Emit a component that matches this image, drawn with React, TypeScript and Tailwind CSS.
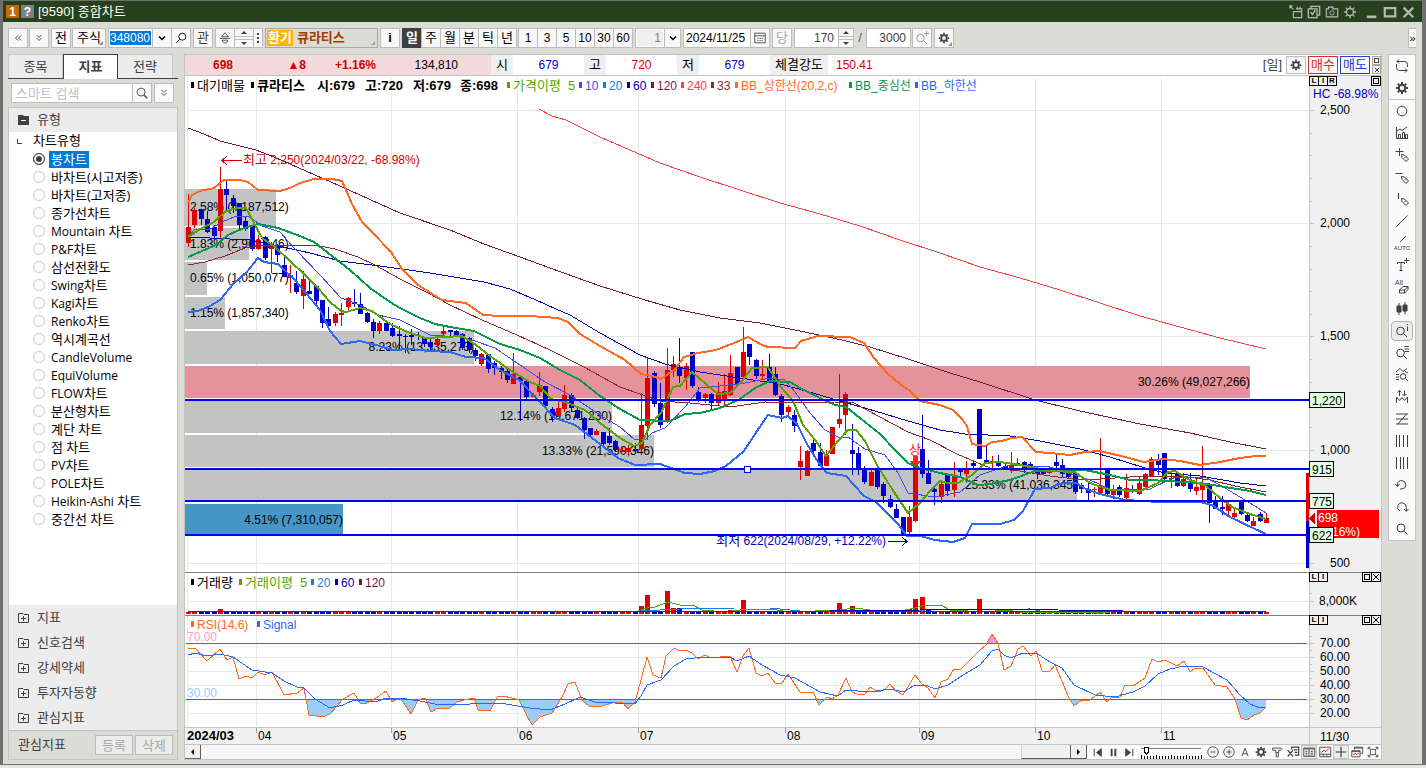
import { useState } from "react";
import type { ReactNode } from "react";
import clsx from "clsx";

// [high, body top, body bottom, low, rising]
const candles: number[][] = [
  [194, 227, 243, 247, 1], [208, 210, 225, 228, 1], [209, 209, 219, 225, 0], [211, 219, 232, 233, 0], [225, 227, 236, 240, 0],
  [167, 189, 231, 238, 1], [181, 189, 195, 212, 0], [195, 198, 206, 213, 0], [203, 203, 225, 229, 0], [217, 221, 229, 231, 0],
  [225, 225, 249, 251, 0], [235, 240, 249, 250, 1], [236, 237, 258, 260, 0], [242, 246, 249, 273, 1], [244, 247, 255, 262, 0],
  [257, 265, 277, 277, 0], [265, 275, 278, 293, 1], [271, 283, 292, 294, 0], [271, 279, 296, 309, 1], [281, 291, 294, 294, 0],
  [286, 286, 301, 305, 0], [300, 300, 323, 328, 0], [307, 319, 326, 326, 0], [312, 314, 323, 326, 1], [303, 313, 315, 326, 1],
  [297, 298, 307, 312, 1], [289, 302, 304, 307, 0], [293, 304, 314, 314, 0], [312, 313, 322, 323, 0], [319, 322, 331, 338, 0],
  [321, 323, 331, 334, 1], [322, 323, 331, 331, 0], [323, 328, 336, 337, 0], [326, 334, 336, 349, 0], [334, 336, 337, 353, 0],
  [329, 335, 337, 345, 0], [332, 335, 336, 340, 0], [337, 338, 344, 347, 0], [338, 342, 347, 352, 0], [338, 339, 345, 347, 1],
  [327, 331, 334, 337, 1], [330, 330, 332, 337, 0], [330, 331, 335, 337, 0], [333, 334, 348, 350, 0], [337, 338, 350, 353, 0],
  [348, 350, 356, 361, 0], [353, 354, 364, 366, 1], [354, 354, 369, 373, 0], [361, 363, 368, 375, 0], [366, 368, 372, 379, 0],
  [369, 371, 380, 383, 0], [353, 374, 384, 384, 1], [377, 377, 381, 421, 0], [380, 381, 397, 399, 0], [393, 395, 397, 397, 1],
  [372, 385, 392, 396, 1], [386, 386, 406, 407, 0], [407, 409, 416, 422, 0], [402, 408, 416, 416, 1], [385, 395, 409, 412, 1],
  [393, 395, 408, 412, 0], [408, 410, 418, 419, 0], [417, 418, 430, 439, 0], [428, 428, 435, 436, 0], [429, 431, 435, 435, 1],
  [432, 432, 444, 448, 0], [428, 436, 443, 445, 0], [440, 441, 450, 452, 0], [447, 450, 452, 452, 1], [445, 448, 452, 453, 1],
  [443, 449, 451, 452, 0], [393, 425, 449, 450, 1], [358, 378, 426, 440, 1], [371, 373, 404, 407, 0], [383, 403, 425, 428, 0],
  [348, 370, 422, 423, 1], [356, 364, 371, 377, 1], [338, 367, 376, 383, 0], [363, 366, 378, 390, 1], [352, 352, 386, 388, 0],
  [387, 392, 400, 402, 0], [393, 394, 398, 403, 1], [393, 394, 403, 409, 0], [382, 392, 403, 405, 1], [374, 391, 401, 405, 1],
  [355, 373, 395, 396, 1], [367, 367, 384, 386, 0], [327, 352, 377, 378, 1], [344, 344, 357, 365, 0], [359, 360, 376, 379, 0],
  [360, 374, 376, 380, 1], [354, 367, 381, 382, 0], [367, 374, 395, 396, 0], [394, 396, 415, 422, 0], [405, 407, 412, 417, 1],
  [410, 415, 426, 432, 0], [446, 461, 467, 480, 1], [450, 451, 476, 476, 1], [440, 443, 451, 453, 0], [443, 452, 466, 467, 0],
  [450, 455, 466, 466, 1], [427, 427, 454, 454, 1], [374, 419, 424, 428, 1], [392, 394, 415, 435, 1], [424, 450, 454, 475, 0],
  [447, 453, 469, 475, 0], [466, 468, 482, 484, 0], [470, 472, 486, 486, 1], [468, 469, 487, 489, 0], [482, 484, 496, 503, 0],
  [495, 499, 507, 508, 0], [504, 509, 518, 518, 0], [517, 517, 534, 534, 0], [506, 517, 532, 534, 1], [465, 465, 521, 522, 1],
  [415, 449, 474, 478, 0], [460, 473, 484, 484, 0], [487, 489, 492, 505, 0], [481, 484, 497, 503, 1], [474, 475, 491, 496, 0],
  [462, 476, 490, 497, 1], [468, 470, 472, 477, 0], [461, 469, 474, 478, 1], [461, 463, 466, 470, 0], [409, 409, 459, 459, 0],
  [445, 460, 462, 463, 0], [456, 461, 463, 471, 1], [455, 462, 466, 467, 0], [462, 466, 469, 470, 0], [452, 466, 468, 473, 1],
  [458, 463, 464, 465, 1], [461, 462, 468, 473, 0], [462, 464, 469, 470, 0], [467, 469, 474, 479, 0], [468, 472, 474, 475, 0],
  [467, 470, 473, 474, 1], [453, 462, 466, 470, 0], [459, 465, 474, 478, 0], [472, 473, 477, 479, 0], [473, 473, 492, 494, 0],
  [483, 485, 489, 493, 0], [483, 489, 493, 500, 0], [487, 489, 490, 497, 1], [438, 486, 493, 494, 1], [468, 469, 494, 495, 0],
  [485, 490, 495, 499, 1], [485, 487, 495, 497, 0], [474, 488, 498, 499, 1], [485, 489, 491, 493, 0], [477, 483, 494, 495, 1],
  [473, 474, 487, 489, 1], [457, 459, 476, 477, 1], [454, 459, 465, 475, 0], [453, 453, 479, 480, 0], [470, 478, 479, 488, 1],
  [473, 474, 486, 487, 0], [473, 479, 486, 487, 1], [473, 482, 489, 492, 0], [477, 487, 491, 495, 1], [446, 485, 490, 501, 1],
  [483, 484, 503, 523, 0], [496, 501, 509, 509, 0], [496, 507, 509, 515, 0], [502, 504, 511, 516, 1], [507, 513, 517, 518, 1],
  [500, 501, 514, 515, 0], [514, 515, 521, 522, 0], [517, 521, 526, 526, 1], [512, 514, 521, 522, 0], [513, 518, 523, 523, 1],
];

const barX = (i: number) => Math.round(188 + i * 6.38);

// bars taller than the usual one-pixel volume
const volumeTops: Record<number, number> = {
  5: 609, 71: 606, 72: 595, 73: 610, 75: 591, 76: 608, 77: 608, 85: 610, 87: 600, 102: 603, 104: 606, 113: 609, 114: 599, 115: 597, 116: 609, 120: 611, 124: 599,
};

const profile = [
  { y: 189, h: 37, x2: 276, text: "2.58% (4,187,512)", tx: 190, start: true, ty: 211 },
  { y: 228, h: 32, x2: 249, text: "1.83% (2,968,146)", tx: 190, start: true, ty: 248 },
  { y: 262, h: 33, x2: 207, text: "0.65% (1,050,077)", tx: 190, start: true, ty: 282 },
  { y: 297, h: 32, x2: 225, text: "1.15% (1,857,340)", tx: 190, start: true, ty: 317 },
  { y: 331, h: 33, x2: 474, text: "8.23% (13,335,273)", tx: 474, ty: 351 },
  { y: 366, h: 32, x2: 1250, text: "30.26% (49,027,266)", tx: 1250, ty: 386, fill: "#e6929a" },
  { y: 401, h: 32, x2: 612, text: "12.14% (19,671,230)", tx: 612, ty: 420 },
  { y: 435, h: 32, x2: 654, text: "13.33% (21,590,346)", tx: 654, ty: 455 },
  { y: 470, h: 31, x2: 1077, text: "25.33% (41,036,345)", tx: 1077, ty: 489 },
  { y: 504, h: 30, x2: 343, text: "4.51% (7,310,057)", tx: 343, ty: 524, fill: "#4696c6" },
];

const lines = [
  { c: "#ff4040", w: 1, p: "539,109 552,116 566,120 580,127 600,137 630,150 660,163 700,177 740,190 780,203 820,214 860,226 900,240 940,253 980,267 1020,278 1060,290 1100,303 1140,316 1180,327 1220,338 1266,349" },
  { c: "#701850", w: 1, p: "188,128 204,134 220,141 256,150 274,157 290,164 340,186 400,213 450,230 484,244 520,257 550,268 600,286 645,300 680,310 720,318 760,323 800,331 842,340 870,347 908,359 950,373 980,382 1035,400 1080,411 1140,424 1190,433 1230,442 1266,449" },
  { c: "#0000b8", w: 1, p: "188,237 210,238 250,240 265,243 310,253 340,261 380,266 430,273 484,282 510,289 536,300 556,309 570,315 600,333 640,355 665,364 700,372 740,378 780,384 806,391 840,401 875,411 908,421 940,430 965,434 1010,436 1040,441 1080,449 1110,457 1145,468 1165,473 1200,476 1240,483 1266,486" },
  { c: "#902828", w: 1, p: "188,265 205,262 225,256 245,248 265,245 315,245 335,249 358,257 375,265 400,279 430,294 450,305 482,320 517,335 550,350 584,367 620,387 640,394 660,401 690,403 730,407 765,402 800,403 835,402 852,402 880,417 908,432 930,440 957,454 990,468 1020,471 1050,476 1075,479 1100,479 1130,477 1180,476 1210,480 1235,486 1266,492" },
  { c: "#4848f0", w: 1, p: "188,237 195,229 210,229 222,222 234,217 248,216 262,226 280,232 295,249 320,275 341,298 360,305 378,315 400,320 430,335 460,337 475,341 495,348 520,365 545,382 570,395 600,415 620,427 634,439 645,440 652,433 665,428 685,407 700,388 720,386 745,383 770,378 785,380 795,392 810,413 825,430 838,437 848,437 865,449 885,455 898,473 908,493 935,497 960,492 980,475 1010,465 1050,467 1090,480 1110,489 1150,489 1175,477 1205,477 1225,488 1250,503 1266,513" },
  { c: "#009c48", w: 2, p: "188,257 202,251 216,245 228,235 244,228 258,224 278,228 300,236 314,242 332,256 350,270 370,288 390,302 400,308 420,318 435,324 450,327 474,331 500,344 520,350 540,358 560,370 580,380 600,396 620,409 640,420 670,421 685,414 700,413 720,408 740,399 755,388 770,381 790,382 800,388 820,398 835,405 846,407 860,418 880,434 895,450 908,463 920,468 940,473 960,477 978,485 990,484 1010,480 1035,471 1060,470 1085,470 1110,475 1130,480 1150,480 1200,483 1225,487 1250,491 1266,495" },
  { c: "#ff6820", w: 2, p: "188,203 192,195 200,191 214,188 224,180 240,180 248,182 258,190 280,191 290,188 300,183 314,179 332,179 342,181 352,204 362,222 372,232 391,252 402,269 418,285 426,290 442,300 466,303 483,315 500,316 530,316 558,318 568,322 580,334 600,346 625,360 641,374 652,376 661,379 675,369 684,357 698,353 716,350 734,343 748,337 762,345 768,347 795,348 801,341 818,336 850,337 864,343 874,358 888,374 900,384 910,391 920,401 940,405 953,410 962,419 967,426 972,444 985,446 992,442 1002,441 1012,438 1022,437 1036,452 1050,453 1070,455 1085,452 1100,451 1125,457 1144,462 1163,459 1180,461 1200,465 1220,462 1240,458 1256,456 1266,456" },
  { c: "#2c68f8", w: 2, p: "188,312 198,311 210,306 220,300 234,283 246,273 258,258 264,262 278,264 295,280 306,293 320,310 330,331 341,344 360,341 376,345 393,350 410,349 430,351 450,352 466,357 484,358 500,370 519,380 540,402 555,418 575,425 600,444 618,458 635,465 660,464 685,473 700,474 715,471 726,466 744,451 757,431 768,415 782,418 788,416 797,424 807,444 818,462 827,473 846,476 864,496 876,502 898,524 907,536 920,536 935,540 953,542 965,538 972,524 1000,524 1014,520 1023,511 1035,489 1050,488 1062,483 1076,483 1086,489 1100,494 1125,500 1160,502 1200,502 1212,505 1230,517 1255,529 1266,534" },
  { c: "#55a400", w: 2, p: "188,237 200,229 214,222 226,211 238,208 246,208 262,238 275,247 290,261 305,275 318,288 330,302 341,311 346,312 360,308 372,311 390,324 405,331 425,338 445,337 462,336 476,345 490,356 510,370 530,382 540,386 551,399 565,402 585,410 600,423 620,438 634,446 642,443 650,425 661,413 667,400 673,387 680,386 692,372 706,384 718,394 730,393 742,381 752,368 768,367 780,386 793,401 803,425 815,440 826,456 838,441 848,430 856,430 865,441 877,465 892,489 908,513 920,503 930,491 940,481 948,483 958,483 972,475 985,463 1000,462 1020,465 1050,471 1075,472 1090,483 1110,490 1140,491 1158,483 1168,472 1175,471 1188,479 1206,486 1220,498 1232,507 1250,514 1266,519" },
];

const rsi =
  "188,649 195,648 207,661 220,649 227,660 233,657 239,679 246,676 252,678 258,672 265,675 272,672 284,695 297,693 304,688 309,715 322,717 330,714 343,699 354,693 360,703 367,703 376,698 386,691 392,702 400,698 405,705 411,714 418,700 425,698 431,712 438,708 450,708 457,702 464,700 474,698 478,710 490,711 497,697 503,696 512,698 519,700 526,714 532,725 540,717 552,713 562,697 568,684 575,682 582,700 590,707 602,706 615,702 623,703 628,709 635,702 641,680 647,657 653,675 661,678 666,656 674,648 680,651 686,650 692,653 698,659 705,655 711,658 730,656 737,672 743,656 749,648 756,673 762,676 768,673 775,683 782,683 788,674 800,692 813,692 819,705 827,697 832,699 838,695 846,678 852,692 857,694 865,694 870,687 878,692 884,690 890,684 896,691 903,695 915,675 922,684 928,688 935,698 941,682 948,679 954,669 960,670 980,650 986,645 992,634 998,643 1004,670 1011,666 1018,649 1023,646 1031,656 1036,651 1042,671 1050,671 1055,665 1062,681 1068,696 1074,706 1082,700 1090,700 1100,692 1107,702 1112,697 1120,697 1125,685 1133,686 1145,678 1152,659 1158,662 1165,660 1177,666 1184,661 1190,672 1195,668 1203,668 1215,685 1227,687 1235,699 1241,718 1247,720 1254,715 1260,713 1266,707";
const signal =
  "188,655 195,653 207,656 220,654 233,657 252,670 272,673 284,681 297,687 304,688 315,699 330,708 343,705 354,700 375,702 386,698 400,698 420,701 440,705 470,704 500,703 530,708 550,710 565,704 580,697 595,702 615,703 635,704 641,696 647,685 661,680 674,666 686,659 705,657 730,657 737,661 749,656 762,665 780,675 795,678 820,692 838,696 846,690 870,692 890,689 903,692 915,685 928,686 935,689 948,685 960,677 980,665 992,651 998,649 1004,655 1011,658 1023,653 1036,653 1050,662 1062,668 1074,685 1095,695 1115,697 1133,692 1145,686 1158,674 1170,669 1184,666 1203,667 1227,680 1240,695 1250,704 1260,708 1266,707";

const legends = [
  { x: 191, y: 90, t: "대기매물", c: "#000" },
  { x: 251, y: 90, t: "큐라티스", c: "#000", b: true },
  { x: 311, y: 90, t: "시:679", c: "#000", b: true, bare: true },
  { x: 359, y: 90, t: "고:720", c: "#000", b: true, bare: true },
  { x: 407, y: 90, t: "저:679", c: "#000", b: true, bare: true },
  { x: 454, y: 90, t: "종:698", c: "#000", b: true, bare: true },
  { x: 507, y: 90, t: "가격이평  5", c: "#55a400" },
  { x: 579, y: 90, t: "10", c: "#4848f0" },
  { x: 603, y: 90, t: "20", c: "#1080d8" },
  { x: 627, y: 90, t: "60", c: "#0000b8" },
  { x: 651, y: 90, t: "120", c: "#701850" },
  { x: 681, y: 90, t: "240", c: "#ff4040" },
  { x: 711, y: 90, t: "33", c: "#902828" },
  { x: 735, y: 90, t: "BB_상한선(20,2,c)", c: "#ff6820" },
  { x: 849, y: 90, t: "BB_중심선", c: "#009c48" },
  { x: 915, y: 90, t: "BB_하한선", c: "#2c68f8" },
  { x: 191, y: 587, t: "거래량", c: "#000" },
  { x: 239, y: 587, t: "거래이평  5", c: "#55a400" },
  { x: 311, y: 587, t: "20", c: "#1080d8" },
  { x: 335, y: 587, t: "60", c: "#0000b8" },
  { x: 359, y: 587, t: "120", c: "#701850" },
  { x: 191, y: 629, t: "RSI(14,6)", c: "#ff6820" },
  { x: 257, y: 629, t: "Signal", c: "#2c68f8" },
];

const months: [number, string][] = [
  [256, "04"], [391, "05"], [517, "06"], [638, "07"], [785, "08"], [919, "09"], [1035, "10"], [1161, "11"],
];

const levels = [
  { y: 400, t: "1,220", w: 35 },
  { y: 469, t: "915", w: 24 },
  { y: 501, t: "775", w: 24 },
  { y: 535, t: "622", w: 24 },
];

function PriceChart() {
  return (
    <svg viewBox="185 76 1196 668" className="block h-auto w-full text-[12px]" role="img" aria-label="큐라티스 일봉 차트" shapeRendering="crispEdges">
      <rect x="185" y="76" width="1196" height="668" fill="#fff" />
      <rect x="1309" y="76" width="72" height="668" fill="#f0f0f0" />
      <rect x="185" y="727" width="1196" height="17" fill="#f0f0f0" />

      {/* Grid */}
      <g fill="#e8e8e8">
        {[110, 223, 336, 450, 563, 601, 657, 671, 685, 713].map((y) => (
          <rect key={y} x="187" y={y} width="1121" height="1" />
        ))}
        {[187, ...months.map((m) => m[0])].map((x) => (
          <rect key={x} x={x} y="77" width="1" height="649" />
        ))}
      </g>

      {/* Volume profile */}
      {profile.map((p) => (
        <rect key={p.y} x="185" y={p.y} width={p.x2 - 185} height={p.h} fill={p.fill ?? "#c3c3c3"} />
      ))}
      {profile.map((p) => (
        <text key={p.y} x={p.tx} y={p.ty} textAnchor={p.start ? "start" : "end"}>
          {p.text}
        </text>
      ))}

      {/* Candles */}
      {candles.map(([hi, top, bot, lo, up], i) => (
        <g key={i} fill={up ? "#e00000" : "#0000c8"}>
          <rect x={barX(i)} y={hi} width="1" height={Math.max(lo - hi, 1)} />
          <rect x={barX(i) - 2} y={top} width="5" height={Math.max(bot - top, 1)} />
        </g>
      ))}

      {lines.map((l) => (
        <polyline key={l.c} points={l.p} fill="none" stroke={l.c} strokeWidth={l.w} />
      ))}

      {/* Annotations */}
      <g fill="none" strokeWidth="1">
        <path d="M222 160.5H242M227 156L222 160.5L227 165" stroke="#d00000" />
        <path d="M888 541.5H907M902 537L907 541.5L902 546" stroke="#0000b8" />
      </g>
      <text x="243" y="164" fill="#d00000">
        <tspan fontSize="13">최고</tspan>  2,250(2024/03/22, -68.98%)
      </text>
      <text x="886" y="545" fill="#0000b8" textAnchor="end">
        <tspan fontSize="13">최저</tspan>  622(2024/08/29, +12.22%)
      </text>
      <text x="909" y="454" fill="#ff2020" fontSize="13">
        상
      </text>
      <path d="M913 456H918V461H921L915.5 467L910 461H913Z" fill="#ff2020" />

      {/* Price levels */}
      {levels.map((l) => (
        <rect key={l.t} x="185" y={l.y - 1} width="1124" height="2" fill="#0000ff" />
      ))}
      <rect x="744.5" y="466.5" width="6" height="6" fill="#fff" stroke="#0000ff" />
      <rect x="1306" y="473" width="3" height="48" fill="#e00000" />
      <rect x="1306" y="521" width="3" height="47" fill="#0000c8" />

      {/* Volume */}
      {candles.map((c, i) => {
        const top = volumeTops[i] ?? (i > 70 && i < 125 ? 611 : 612);
        return <rect key={i} x={barX(i) - 2} y={top} width="5" height={613 - top + 1} fill={c[4] || top < 608 ? "#e00000" : "#0000c8"} />;
      })}
      <g fill="none" strokeWidth="1">
        <polyline points="638,611 647,608 655,607 668,602 680,605 693,605 702,610 725,612 740,610 770,609 790,612 840,610 855,608 870,610 900,611 915,608 925,605 941,605 950,610 985,612 1005,610 1020,612 1110,612" stroke="#55a400" />
        <polyline points="640,611 680,609 735,608 770,608 800,611 905,611 925,610 1030,609 1040,611 1266,612" stroke="#1080d8" />
        <polyline points="188,611 290,611 640,612 830,611 920,610 1026,609.5 1123,611 1124,612" stroke="#0000b8" />
        <polyline points="188,612 1266,611" stroke="#701850" />
      </g>

      {/* RSI */}
      <clipPath id="below30">
        <rect x="185" y="699" width="1124" height="28" />
      </clipPath>
      <clipPath id="above70">
        <rect x="185" y="616" width="1124" height="27" />
      </clipPath>
      <polygon points={`188,699 ${rsi} 1266,699`} fill="#99ccff" clipPath="url(#below30)" />
      <polygon points={`188,643 ${rsi} 1266,643`} fill="#ff99cc" clipPath="url(#above70)" />
      <rect x="186" y="643" width="1121" height="1" fill="#ff00ff" />
      <rect x="186" y="699" width="1121" height="1" fill="#ff00ff" />
      <polyline points={rsi} fill="none" stroke="#ff6820" />
      <polyline points={signal} fill="none" stroke="#2c68f8" />
      <text x="187" y="641" fill="#ff99cc">70.00</text>
      <text x="187" y="697" fill="#99ccff">30.00</text>

      {/* Pane dividers */}
      <rect x="185" y="572" width="1196" height="1" fill="#808080" />
      <rect x="185" y="615" width="1196" height="1" fill="#808080" />
      <rect x="185" y="727" width="1196" height="1" fill="#c3c3c3" />
      <rect x="1309" y="76" width="1" height="668" fill="#c3c3c3" />

      {/* Legends */}
      {legends.map((l) => (
        <g key={`${l.x}-${l.y}`} fill={l.c}>
          {!l.bare && <rect x={l.x} y={l.y - 8} width="3" height="6" />}
          <text x={l.x + 6} y={l.y} fontSize={/^[가-힣]/.test(l.t) ? 13 : 12} fontWeight={l.b ? 700 : 400} className="whitespace-pre">
            {l.t}
          </text>
        </g>
      ))}

      {/* Axis */}
      <text x="1313" y="98" fill="#0000c8">HC -68.98%</text>
      {[[110, "2,500"], [223, "2,000"], [336, "1,500"], [450, "1,000"], [563, "500"], [601, "8,000K"], [643, "70.00"], [657, "60.00"], [671, "50.00"], [685, "40.00"], [699, "30.00"], [713, "20.00"]].map(([y, t]) => (
        <g key={t}>
          <rect x="1309" y={y} width="5" height="1" fill="#c3c3c3" />
          <text x={t === "8,000K" ? 1357 : 1350} y={Number(y) + 4} textAnchor="end">
            {t}
          </text>
        </g>
      ))}
      {[133, 155, 178, 201, 246, 269, 291, 314, 359, 382, 405, 427, 472, 495, 517, 540, 593, 636, 650, 664, 678, 692, 706].map((y) => (
        <rect key={y} x="1309" y={y} width="3" height="1" fill="#c3c3c3" />
      ))}
      <rect x="1317" y="510" width="62" height="28" fill="#ff0000" />
      <path d="M1309 518.5L1315 513V524Z" fill="#d00000" />
      <text x="1318" y="522" fill="#fff">698</text>
      <text x="1360" y="536" fill="#fff" textAnchor="end">(1.16%)</text>
      {levels.map((l) => (
        <g key={l.t}>
          <rect x="1309.5" y={l.y - 7.5} width={l.w} height="15" fill="#e1ffe1" stroke="#000" />
          <text x="1312" y={l.y + 5}>{l.t}</text>
        </g>
      ))}

      {/* Dates */}
      <text x="187" y="740" fontWeight="700" fontSize="13">2024/03</text>
      {months.map(([x, m]) => (
        <g key={m}>
          <rect x={x} y="728" width="1" height="5" fill="#a0a0a0" />
          <text x={x + 2} y="740">{m}</text>
        </g>
      ))}
      <text x="1320" y="741">11/30</text>
    </svg>
  );
}

function Icon({ children, size = 16 }: { children: ReactNode; size?: number }) {
  return (
    <svg width={size} height={size} viewBox="0 0 16 16" fill="none" stroke="currentColor" strokeWidth="1" className="block shrink-0" aria-hidden="true">
      {children}
    </svg>
  );
}

const gear = (
  <>
    <circle cx="8" cy="8" r="3.2" strokeWidth="2" />
    <path d="M8 2V4M8 12V14M2 8H4M12 8H14M3.8 3.8L5.2 5.2M10.8 10.8L12.2 12.2M3.8 12.2L5.2 10.8M10.8 5.2L12.2 3.8" strokeWidth="2" />
  </>
);
const pencil = <path d="M7.5 7.5L10.5 8L14.5 12L12 14.5L8 10.5ZM10.5 11L12 9.5" />;
const lens = (
  <>
    <circle cx="6.5" cy="8" r="3.8" />
    <path d="M9.5 10.5L13 14" />
  </>
);

const rail: { name: string; art: ReactNode; active?: boolean }[] = [
  { name: "새로고침", art: <path d="M5 1.5L3 3.5L5 5.5M3 3.5H10.5Q13.5 3.5 13.5 6.5V9M2.5 6V9.5Q2.5 12.5 5.5 12.5H13M11 10.5L13 12.5L11 14.5" /> },
  { name: "설정", art: gear },
  { name: "원", art: <circle cx="8" cy="8" r="4.8" /> },
  { name: "차트", art: <path d="M2.5 2V13.5H14M4.5 13V9.5H6.5V13M8.5 13V7.5H10.5V13M11.5 13V9.5H13.5V13M3 6L6 4L8 5.5L13 2" /> },
  { name: "십자선 그리기", art: <><path d="M5.5 1V9M1.5 4.5H9.5" />{pencil}</> },
  { name: "수평선 그리기", art: <><path d="M1.5 4.5H8.5" />{pencil}</> },
  { name: "수직선 그리기", art: <><path d="M4.5 2V8" />{pencil}</> },
  { name: "추세선", art: <path d="M2.5 13.5L13.5 2.5" /> },
  { name: "자동 추세선", art: <><path d="M6 7L12 1" /><text x="8" y="15" textAnchor="middle" fontSize="6" fill="currentColor" stroke="none">AUTO</text></> },
  { name: "텍스트", art: <><path d="M3.5 7V5.5H10.5V7M7 5.5V13.5M5.5 13.5H8.5M12.5 1V6M10 3.5H15" /></> },
  { name: "모두 지우기", art: <><text x="1" y="6" fontSize="7" fill="currentColor" stroke="none">All</text><path d="M5.5 11L9 7.5H14V10.5L10.5 14H5.5ZM5.5 11H10.5V14M10.5 11L14 7.5" /></> },
  { name: "봉", art: <path d="M5 2V14M11 1V13M3 5H7V11H3ZM9 4H13V10H9Z" fill="currentColor" /> },
  { name: "정보 조회", active: true, art: <>{lens}<path d="M13.5 1V2M13.5 3.5V8" /></> },
  { name: "목록 조회", art: <>{lens}<path d="M10.5 1.5H15M10.5 4H15M10.5 6.5H15" /></> },
  { name: "패턴 조회", art: <><path d="M2 5L6 1.5L9 4.5L13 1.5M2 7.5H5M2 10H5M2 12.5H5M11.5 11.5L14 14M11 4.5L14 6" /><circle cx="9" cy="9.5" r="2.8" /></> },
  { name: "매매 신호", art: <path d="M5.5 7V1.5M3.5 3.5L5.5 1.5L7.5 3.5M10.5 1.5V7M8.5 5L10.5 7L12.5 5M2.5 14V8L5.5 11.5L8 8.5L10.5 11.5L13.5 8V14" /> },
  { name: "피보나치", art: <path d="M2 3H14M2 8H14M2 13H14M12.5 3L4 13" /> },
  { name: "시간 구간", art: <path d="M2.5 2V14M5.5 2V14M9.5 2V14M13.5 2V14" /> },
  { name: "시간 주기", art: <path d="M2.5 2V14M6.5 2V14M9.5 2V14M13.5 2V14" /> },
  { name: "되돌리기", art: <path d="M3.5 9V7A4.2 4.2 0 1 1 8 12M1.5 7L3.5 9.5L5.5 7M8 12H6" /> },
  { name: "다시 실행", art: <path d="M6 12A4.3 4.3 0 1 1 12.3 8.5V12M10 10L12.3 12.3L14.5 10" /> },
  { name: "돋보기", art: <><circle cx="7" cy="7" r="4" /><path d="M10 10L13.5 13.5" /></> },
];

const footer: { name: string; art: ReactNode; boxed?: boolean }[] = [
  { name: "축소", art: <><circle cx="8" cy="8" r="6" /><path d="M5 8H11" /></> },
  { name: "확대", art: <><circle cx="8" cy="8" r="6" /><path d="M5 8H11M8 5V11" /></> },
  { name: "자동", art: <path d="M4.5 13L8 3.5L11.5 13M5.5 10H10.5" /> },
  { name: "환경 설정", art: gear },
  { name: "도구", art: <path d="M3 3.5H12.5L14 5.5M3 3.5V6H6.5M6.5 6V8.5H10V6H12.5M7 8.5V13.5H9.5V8.5" /> },
  { name: "엑셀 저장", art: <path d="M6.5 5V2.5H14.5V11.5H10M9 5.5H13M10 8.5H13M2 6L8 13M8 6L2 13" strokeWidth="1.4" /> },
  { name: "데이터", boxed: true, art: <path d="M2 3.5H14.5V13H2ZM2 4.5H14.5M8 5V13M4 7.5H6M4 9.5H6M4 11.5H6M10 7.5H12.5M10 9.5H12.5M10 11.5H12.5" /> },
  { name: "지표 추가", art: <><path d="M2 2.5H14.5V13.5H2ZM2 10.5H14.5M6 10.5V13.5M10 10.5V13.5" /><path d="M4 8.5L7 6L9 7.5L12.5 4" stroke="#c00000" /></> },
  { name: "십자선", boxed: true, art: <path d="M8 2V14M2 8H14" strokeWidth="1.4" /> },
  { name: "창 복사", art: <><path d="M5 5V2.5H14.5V9.5H12M5 3.5H14.5M2 6.5H11.5V13.5H2ZM2 7.5H11.5" /><path d="M4 11.5L6 9.5L8 11L10 9" stroke="#c00000" /></> },
  { name: "전체 화면", art: <path d="M2.5 5V2.5H5M11 2.5H13.5V5M13.5 11V13.5H11M5 13.5H2.5V11M5 5H11V11H5ZM3 3L5 5M13 3L11 5M13 13L11 11M3 13L5 11" /> },
];

const chartTypes = [
  "봉차트", "바차트(시고저종)", "바차트(고저종)", "종가선차트", "Mountain 차트", "P&F차트", "삼선전환도", "Swing차트", "Kagi차트", "Renko차트",
  "역시계곡선", "CandleVolume", "EquiVolume", "FLOW차트", "분산형차트", "계단 차트", "점 차트", "PV차트", "POLE차트", "Heikin-Ashi 차트", "중간선 차트",
];

const box = "flex h-5 shrink-0 items-center justify-center border border-[#bcbcbc] bg-[#f8f8f8]";

function Chevrons({ turn }: { turn?: string }) {
  return (
    <Icon size={10}>
      <g transform={turn}>
        <path d="M8 4L4 8L8 12M13 4L9 8L13 12" stroke="#404040" strokeWidth="1.4" />
      </g>
    </Icon>
  );
}

function Spinner({ name, className }: { name: string; className?: string }) {
  return (
    <div className={clsx("flex h-5 shrink-0 flex-col justify-between border border-[#bcbcbc] bg-[#f8f8f8]", className)}>
      <button aria-label={`${name} 증가`} className="flex h-2 w-full items-center justify-center border-b border-[#bcbcbc]">
        <span className="border-x-[3px] border-b-[3px] border-x-transparent border-b-[#404040]" />
      </button>
      <button aria-label={`${name} 감소`} className="flex h-2 w-full items-center justify-center border-t border-[#bcbcbc]">
        <span className="border-x-[3px] border-t-[3px] border-x-transparent border-t-[#404040]" />
      </button>
    </div>
  );
}

function Toolbar() {
  const [period, setPeriod] = useState("일");
  return (
    <div className="flex h-8 items-center pl-[5px] text-[13px]">
      <button aria-label="이전" className={clsx(box, "w-5")}><Chevrons /></button>
      <button aria-label="펼치기" className={clsx(box, "ml-px w-5")}><Chevrons turn="rotate(-90 8 8)" /></button>
      <button className={clsx(box, "ml-0.5 w-5")}>전</button>
      <button className={clsx(box, "relative ml-px w-[34px]")}>
        주식
        <span className="absolute right-0.5 bottom-0.5 border-b-4 border-l-4 border-b-[#909090] border-l-transparent" />
      </button>
      <div className="ml-0.5 flex h-5 w-[45px] items-center border border-[#bcbcbc] bg-white pl-px">
        <input aria-label="종목코드" defaultValue="348080" className="h-3.5 w-[41px] bg-[#0078d7] text-[12px] text-white outline-none" />
      </div>
      <button aria-label="종목 목록" className={clsx(box, "-ml-px w-5")}><Icon size={12}><path d="M4 6L8 10L12 6" strokeWidth="2" /></Icon></button>
      <button aria-label="종목 검색" className={clsx(box, "-ml-px w-5")}><Icon size={14}><circle cx="9.5" cy="6.5" r="4" /><path d="M6.5 9.5L2.5 13.5" /></Icon></button>
      <button className={clsx(box, "ml-0.5 w-5 text-[#404040]")}>관</button>
      <button aria-label="종목 승계" className={clsx(box, "ml-0.5 w-5 text-[#404040]")}><Icon size={14}><path d="M8 2L4 6.5H12ZM2 8.5H14M5 10.5H11V12L8 14L5 12Z" /></Icon></button>
      <Spinner name="종목" className="-ml-px w-5" />
      <button aria-label="더보기" className={clsx(box, "-ml-px w-2.5 flex-col gap-0.5")}>
        <span className="size-0.5 bg-[#404040]" /><span className="size-0.5 bg-[#404040]" /><span className="size-0.5 bg-[#404040]" />
      </button>
      <button className="relative ml-0.5 flex h-5 w-[113px] shrink-0 items-center border border-[#a8a8a8] bg-[#dcdcd7] font-bold text-[#a03c00]">
        <span className="mr-1 ml-px bg-[#ffb400] px-px leading-4 text-white">환기</span>큐라티스
        <span className="absolute right-0.5 bottom-0.5 border-b-4 border-l-4 border-b-[#a0a0a0] border-l-transparent" />
      </button>
      <button className={clsx(box, "ml-0.5 w-5 font-bold")}>i</button>
      <div className="ml-0.5 flex">
        {["일", "주", "월", "분", "틱", "년"].map((p) => (
          <button key={p} onClick={() => setPeriod(p)} className={clsx("-mr-px flex h-5 w-5 items-center justify-center border", period === p ? "border-[#404040] bg-[#404040] font-bold text-white" : "border-[#bcbcbc] bg-[#f8f8f8]")}>
            {p}
          </button>
        ))}
      </div>
      <div className="ml-0.5 flex text-[12px]">
        {["1", "3", "5", "10", "30", "60"].map((n) => (
          <button key={n} className={clsx(box, "-mr-px w-5")}>{n}</button>
        ))}
      </div>
      <div className="ml-[3px] flex h-5 w-[30px] items-center border border-[#bcbcbc] bg-white p-px">
        <input aria-label="주기" defaultValue="1" className="h-full w-full bg-[#efefef] pr-0.5 text-right text-[12px] text-[#808080] outline-none" />
      </div>
      <button aria-label="주기 목록" className={clsx(box, "-ml-px w-[17px]")}><Icon size={12}><path d="M4 6L8 10L12 6" strokeWidth="2" /></Icon></button>
      <input aria-label="기준일" defaultValue="2024/11/25" className="ml-0.5 h-5 w-[68px] border border-[#bcbcbc] bg-white pl-0.5 text-[12px] outline-none" />
      <button aria-label="달력" className={clsx(box, "-ml-px w-5 text-[#404040]")}><Icon size={14}><path d="M2 2.5H14V13.5H2ZM2 5.5H14" /><path d="M5 8.5H12M5 11H12" strokeDasharray="1.5 1" /></Icon></button>
      <button className={clsx(box, "ml-0.5 w-5 text-[#a8a8a0]")}>당</button>
      <input aria-label="조회 개수" defaultValue="170" className="ml-0.5 h-5 w-[45px] border border-[#bcbcbc] bg-white pr-1 text-right text-[12px] text-[#404040] outline-none" />
      <Spinner name="조회 개수" className="-ml-px w-4" />
      <span className="w-3 text-center text-[#606060]">/</span>
      <input aria-label="전체 개수" defaultValue="3000" className="h-5 w-[45px] border border-[#bcbcbc] bg-white pr-1 text-right text-[12px] text-[#404040] outline-none" />
      <button aria-label="확대 조회" className={clsx(box, "ml-px w-5 text-[#a0a0a0]")}><Icon>{lens}<path d="M12.5 1V6M10 3.5H15" /></Icon></button>
      <button aria-label="차트 설정" className={clsx(box, "relative ml-0.5 w-5 text-[#404040]")}>
        <Icon size={14}>{gear}</Icon>
        <span className="absolute right-px bottom-px border-b-4 border-l-4 border-b-[#909090] border-l-transparent" />
      </button>
      <button aria-label="더 많은 도구" className="mr-1.5 ml-auto flex h-5 w-2 items-center justify-center border-y border-l border-[#bcbcbc] bg-[#f8f8f8] text-[11px]">»</button>
    </div>
  );
}

function Sidebar() {
  const [type, setType] = useState("봉차트");
  return (
    <aside className="flex w-[170px] shrink-0 flex-col text-[13px]">
      <div className="flex h-[25px] border-b border-[#404040] text-[#404040]">
        <button className="w-[55px] border border-b-0 border-[#c8c8c8] bg-[#ececec]">종목</button>
        <button className="-mb-px w-[55px] border border-b-0 border-[#404040] bg-white font-bold">지표</button>
        <button className="w-[55px] border border-b-0 border-l-0 border-[#c8c8c8] bg-[#ececec]">전략</button>
      </div>
      <div className="mx-[3px] mt-1 flex">
        <input aria-label="스마트 검색" placeholder="스마트 검색" className="h-5 w-[122px] border border-[#bcbcbc] bg-white px-1 outline-none placeholder:text-[#c0c0c0]" />
        <button aria-label="검색" className={clsx(box, "-ml-px w-5 text-[#404040]")}><Icon size={14}><circle cx="7" cy="7" r="4.5" /><path d="M10.5 10.5L14 14" strokeWidth="1.5" /></Icon></button>
        <button aria-label="검색 펼치기" className={clsx(box, "ml-0.5 w-5")}><Chevrons turn="rotate(-90 8 8)" /></button>
      </div>
      <div className="mt-1 flex flex-1 flex-col border border-[#c3c3c3] bg-white">
        <button className="flex h-6 items-center gap-2 bg-[#ececec] pl-[9px] text-[#404040]">
          <svg width="11" height="10" aria-hidden="true"><path d="M0 0H5L6 1H11V10H0Z" fill="#404040" /><path d="M3 5.5H8" stroke="#fff" /></svg>
          유형
        </button>
        <div className="flex-1 [font-family:'Open_Sans','Noto_Sans_CJK_KR',sans-serif]">
          <div className="flex h-[18px] items-center pl-2">
            <span className="mr-[11px] size-[5px] border-b border-l border-[#404040]" />
            차트유형
          </div>
          {chartTypes.map((t) => (
            <label key={t} className="flex h-[18px] items-center gap-1 pl-6">
              <input type="radio" name="chart-type" checked={type === t} onChange={() => setType(t)} className="size-3 shrink-0 appearance-none rounded-full border border-[#c8c8c8] bg-white checked:border-[#404040] checked:bg-[#404040] checked:ring-2 checked:ring-white checked:ring-inset" />
              <span className={clsx("px-0.5 leading-[17px]", type === t && "bg-[#0078d7] text-white")}>
                {t.split(/([A-Za-z&-]+)/).map((part, i) => (i % 2 ? <span key={i} className="text-[12px]">{part}</span> : part))}
              </span>
            </label>
          ))}
        </div>
        {["지표", "신호검색", "강세약세", "투자자동향", "관심지표"].map((s) => (
          <button key={s} className="flex h-[25px] items-center gap-2 bg-[#ececec] pl-[9px] text-[#404040]">
            <svg width="11" height="10" aria-hidden="true" fill="none" stroke="#404040"><path d="M0.5 0.5H5L6 1.5H10.5V9.5H0.5ZM3 5.5H8M5.5 3V8" /></svg>
            {s}
          </button>
        ))}
        <div className="flex h-[29px] items-center border-t border-[#c3c3c3] bg-[#dcdcd7] pr-1 pl-[9px]">
          <span className="mr-auto text-[#404040]">관심지표</span>
          <button className="h-5 w-[38px] border border-[#bcbcbc] bg-[#ececec] leading-[17px] text-[#a8a8a0]">등록</button>
          <button className="ml-0.5 h-5 w-[38px] border border-[#bcbcbc] bg-[#ececec] leading-[17px] text-[#a8a8a0]">삭제</button>
        </div>
      </div>
    </aside>
  );
}

function Quote({ label, value, className, labelWidth = "w-[22px]" }: { label: string; value: string; className: string; labelWidth?: string }) {
  return (
    <>
      <span className={clsx("flex items-center justify-center bg-[#efefef] text-[13px]", labelWidth)}>{label}</span>
      <span className={clsx("flex w-[71px] items-center", className)}>{value}</span>
    </>
  );
}

const cell = "flex h-2.5 w-[10px] items-center justify-center border border-black bg-[#f0f0f0] text-[8px] leading-none font-bold -mr-px";

function PaneButtons({ letters, top, close }: { letters: string[]; top: string; close?: boolean }) {
  return (
    <div className={clsx("absolute right-0 flex w-[72px] justify-between pr-px", top)}>
      <div className="flex">
        {letters.map((l) => (
          <button key={l} className={cell}>{l}</button>
        ))}
      </div>
      <div className="flex">
        <button aria-label="최대화" className={cell}><span className="size-[6px] border border-black" /></button>
        {close && <button aria-label="닫기" className={cell}><Icon size={8}><path d="M2 2L14 14M14 2L2 14" strokeWidth="2" /></Icon></button>}
      </div>
    </div>
  );
}

function ScrollRow() {
  return (
    <div className="flex h-[15px] items-center border-t border-[#c3c3c3] bg-[#fafafa] text-[#404040]">
      <button aria-label="왼쪽" className="flex h-[14px] w-4 shrink-0 items-center justify-center border-r border-b border-[#606060] bg-[#f0f0f0]">
        <span className="border-y-[3px] border-r-[3px] border-y-transparent border-r-black" />
      </button>
      <div className="flex h-[14px] flex-1 justify-end bg-[#f7f7f7]">
        <div className="h-[14px] w-[50px] border-r border-b border-l border-[#606060] border-l-[#d0d0d0] bg-[#f0f0f0]" />
      </div>
      <button aria-label="오른쪽" className="flex h-[14px] w-4 shrink-0 items-center justify-center border-r border-b border-[#606060] bg-[#f0f0f0]">
        <span className="border-y-[3px] border-l-[3px] border-y-transparent border-l-black" />
      </button>
      <div className="ml-[3px] flex gap-px">
        <button aria-label="처음"><Icon size={15}><path d="M4.5 4V12" /><path d="M12 4V12L7 8Z" fill="currentColor" /></Icon></button>
        <button aria-label="일시정지"><Icon size={15}><path d="M6 4V12M10 4V12" strokeWidth="2" /></Icon></button>
        <button aria-label="마지막"><Icon size={15}><path d="M11.5 4V12" /><path d="M4 4V12L9 8Z" fill="currentColor" /></Icon></button>
      </div>
      <label className="relative ml-[3px] block h-[14px] w-[62px] text-black">
        <svg viewBox="0 0 62 14" className="block h-[14px] w-full" shapeRendering="crispEdges" aria-hidden="true">
          <path d="M1 3.5H61" stroke="#808080" />
          {Array.from({ length: 21 }, (_, i) => (
            <rect key={i} x={1 + i * 3} y={i % 5 === 0 ? 10 : 11} width="1" height="4" />
          ))}
          <path d="M4.5 2.5H8.5V7L6.5 9L4.5 7Z" fill="#fff" stroke="#000" />
        </svg>
        <input type="range" aria-label="재생 속도" defaultValue={5} className="absolute inset-0 w-full opacity-0" />
      </label>
      <div className="ml-[3px] flex">
        {footer.map((f) => (
          <button key={f.name} aria-label={f.name} className={clsx("flex h-[14px] w-4 items-center justify-center", f.boxed && "bg-[#ececec] ring-1 ring-[#c3c3c3] ring-inset")}>
            <Icon size={14}>{f.art}</Icon>
          </button>
        ))}
      </div>
    </div>
  );
}

export default function App() {
  return (
    <div className="bg-[#e4e4e4] pb-[3px] [font-family:'Liberation_Sans','Noto_Sans_CJK_KR',sans-serif] text-black">
      <div className="border-t border-r-4 border-b border-l-3 border-[#707070] bg-[#dcdcd7]">
        <header className="flex h-[21px] items-center bg-[#25421c] pr-[7px] pl-[3px] text-[#b8b8b8]">
          <span className="flex size-[13px] items-center justify-center bg-[#c46a00] text-[12px] font-bold text-white">1</span>
          <button aria-label="도움말" className="ml-0.5 flex size-[13px] items-center justify-center bg-[#808080] text-[12px] font-bold text-white">?</button>
          <h1 className="ml-1 text-[13px] text-white">[9590] 종합차트</h1>
          <div className="ml-auto flex items-center gap-1">
            <button aria-label="분리"><Icon size={14}><path d="M5 7V14.5H14.5V4.5H8M5 7.5H14.5M9.5 4V2M12.5 4V2M1 1L5 5M1 4V1H4" strokeWidth="1.3" /></Icon></button>
            <button aria-label="선택 복사"><Icon size={14}><path d="M4.5 4V1.5H14.5V11.5H12M1.5 4.5H11.5V14.5H1.5ZM4 8L6 11L9.5 6" strokeWidth="1.5" /></Icon></button>
            <button aria-label="캡처"><Icon size={14}><path d="M1.5 4.5H4V2.5H9V4.5H14.5V13.5H1.5Z" strokeWidth="1.3" /><circle cx="8" cy="9" r="2.5" /></Icon></button>
            <button aria-label="창 설정"><Icon size={14}><circle cx="8" cy="8" r="4" strokeWidth="1.5" /><path d="M8 1V4M8 12V15M1 8H4M12 8H15M3 3L5 5M11 11L13 13M3 13L5 11M11 5L13 3" strokeWidth="1.5" /></Icon></button>
            <button aria-label="최소화" className="ml-1"><Icon size={14}><path d="M2 13.5H13" strokeWidth="3" /></Icon></button>
            <button aria-label="창 최대화"><Icon size={14}><path d="M2 3.5H14V13H2Z" strokeWidth="2.5" /></Icon></button>
            <button aria-label="창 닫기"><Icon size={14}><path d="M3 3L14 14M14 3L3 14" strokeWidth="2.5" /></Icon></button>
          </div>
        </header>
        <Toolbar />
        <main className="flex items-stretch pb-1 pl-[5px]">
          <Sidebar />
          <section className="ml-1.5 min-w-0 flex-1 border border-[#c3c3c3] bg-white">
            <div className="flex h-[21px] border-b border-[#c3c3c3] text-[12px]">
              <div className="flex w-[306px] items-center bg-[#f3dada] font-bold text-[#d00000]">
                <span className="w-12 text-right">698</span>
                <span className="w-[73px] text-right">▲8</span>
                <span className="w-[70px] text-right">+1.16%</span>
                <span className="w-[82px] text-right font-normal text-black">134,810</span>
              </div>
              <Quote label="시" value="679" className="justify-center text-[#0000c8]" />
              <Quote label="고" value="720" className="justify-center text-[#d00000]" />
              <Quote label="저" value="679" className="justify-center text-[#0000c8]" />
              <Quote label="체결강도" value="150.41" labelWidth="w-[58px]" className="pl-2 text-[#d00000]" />
              <div className="ml-auto flex items-center gap-0.5 text-[13px]">
                <span className="mr-0.5 text-[#404040]">[일]</span>
                <button aria-label="신호 설정" className="flex h-[18px] w-5 items-center justify-center border border-[#bcbcbc] bg-[#f8f8f8] text-[#404040]"><Icon size={14}>{gear}</Icon></button>
                <button className="flex h-[18px] w-[30px] items-center justify-center border border-[#d03030] bg-[#f8f8f8] text-[#d03030]">매수</button>
                <button className="flex h-[18px] w-[30px] items-center justify-center border border-[#2040d0] bg-[#f8f8f8] text-[#2040d0]">매도</button>
                <div className="flex flex-col">
                  <button aria-label="패널 확대" className="flex size-[9px] items-center justify-center border border-[#a8a8a8] bg-[#f8f8f8]"><span className="size-[5px] border border-[#404040]" /></button>
                  <button aria-label="패널 닫기" className="flex size-[9px] items-center justify-center border border-[#a8a8a8] bg-[#f8f8f8]"><Icon size={6}><path d="M2 2L14 14M14 2L2 14" strokeWidth="2" /></Icon></button>
                </div>
              </div>
            </div>
            <div className="relative">
              <PriceChart />
              <PaneButtons letters={["L", "I", "R"]} top="top-0" />
              <PaneButtons letters={["L", "I"]} top="top-[74.2%]" close />
              <PaneButtons letters={["L", "I"]} top="top-[80.7%]" close />
            </div>
            <ScrollRow />
          </section>
          <nav className="mr-1.5 ml-1.5 w-7 shrink-0 self-start border border-[#c3c3c3] bg-[#fafafa] text-[#404040]">
            {rail.map((r, i) => (
              <div key={r.name} className={clsx("flex justify-center", i === 1 && "border-b border-[#c3c3c3]")}>
                <button aria-label={r.name} className={clsx("flex w-[22px] items-center justify-center", r.active ? "my-px h-5 rounded border border-[#b0b0b0] bg-[#ececec]" : "h-[22px]")}>
                  <Icon>{r.art}</Icon>
                </button>
              </div>
            ))}
          </nav>
        </main>
      </div>
    </div>
  );
}
